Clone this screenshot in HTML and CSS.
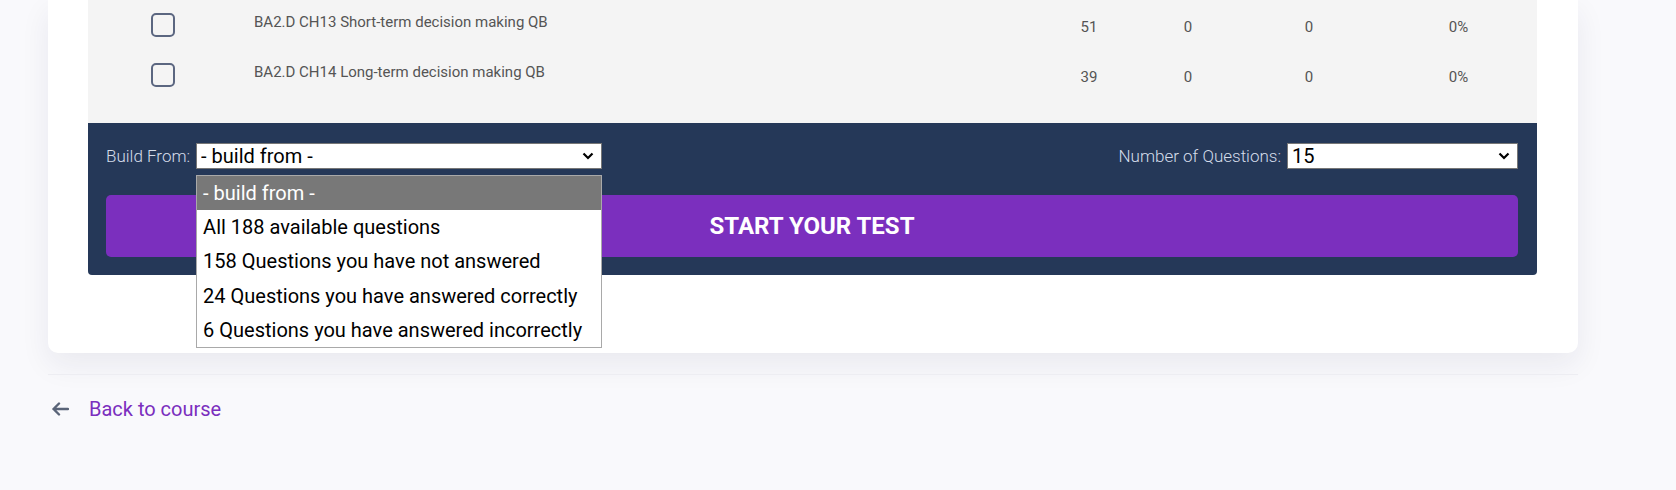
FILE: index.html
```html
<!DOCTYPE html>
<html lang="en">
<head>
    <meta charset="UTF-8">
    <meta name="viewport" content="width=device-width, initial-scale=1.0">
    <title>Build a test</title>
    <link rel="stylesheet" href="styles.css">
</head>
<body>
    <div class="page">
        <div class="card">
            <div class="bank-table">
                <div class="bank-row">
                    <div class="cell-check"><span class="checkbox"></span></div>
                    <div class="cell-name">BA2.D CH13 Short-term decision making QB</div>
                    <div class="cell-num">51</div>
                    <div class="cell-num">0</div>
                    <div class="cell-num">0</div>
                    <div class="cell-num">0%</div>
                </div>
                <div class="bank-row">
                    <div class="cell-check"><span class="checkbox"></span></div>
                    <div class="cell-name">BA2.D CH14 Long-term decision making QB</div>
                    <div class="cell-num">39</div>
                    <div class="cell-num">0</div>
                    <div class="cell-num">0</div>
                    <div class="cell-num">0%</div>
                </div>
            </div>

            <!-- builder panel -->
            <div class="builder">
                <div class="builder-controls">
                    <div class="field">
                        <label for="buildFrom">Build From:</label>
                        <div class="select-wrap build-select">
                            <select id="buildFrom">
                                <option>- build from -</option>
                            </select>
                            <svg class="chevron" width="12" height="8" viewBox="0 0 12 8"><path d="M1.5 1.5 L6 6 L10.5 1.5" fill="none" stroke="#000" stroke-width="2.2"/></svg>
                            <ul class="dropdown">
                                <li class="selected">- build from -</li>
                                <li>All 188 available questions</li>
                                <li>158 Questions you have not answered</li>
                                <li>24 Questions you have answered correctly</li>
                                <li>6 Questions you have answered incorrectly</li>
                            </ul>
                        </div>
                    </div>
                    <div class="field">
                        <label for="numQuestions">Number of Questions:</label>
                        <div class="select-wrap num-select">
                            <select id="numQuestions">
                                <option>15</option>
                            </select>
                            <svg class="chevron" width="12" height="8" viewBox="0 0 12 8"><path d="M1.5 1.5 L6 6 L10.5 1.5" fill="none" stroke="#000" stroke-width="2.2"/></svg>
                        </div>
                    </div>
                </div>
                <button type="button" class="start-btn">Start your test</button>
            </div>
        </div>

        <div class="divider"></div>

        <a class="back-link" href="#">
            <svg width="18" height="14" viewBox="0 0 18 14"><path d="M17 7 H2.5 M8 1.5 L2.5 7 L8 12.5" fill="none" stroke="#5a6478" stroke-width="2.4" stroke-linecap="round" stroke-linejoin="round"/></svg>
            <span>Back to course</span>
        </a>
    </div>
</body>
</html>
```

FILE: styles.css
```css
body {
    margin: 0;
    background-color: #f9f9fc;
    font-family: Roboto, 'Liberation Sans', sans-serif;
    overflow: hidden;
}

.page {
    padding: 0 98px 0 48px;
}

.card {
    background-color: #fff;
    border-radius: 0 0 10px 10px;
    padding: 0 41px 78px 40px;
    box-shadow: 0 12px 30px rgba(30, 30, 70, 0.07);
}

/* tabel bank soal */
.bank-table {
    background-color: #f4f4f4;
    padding-bottom: 23px;
}

.bank-row {
    display: grid;
    grid-template-columns: 150px 802px 98px 100px 142px 1fr;
    height: 50px;
    align-items: center;
    color: #555;
    font-size: 15px;
}

.cell-check {
    display: flex;
    justify-content: center;
}

.checkbox {
    width: 20px;
    height: 20px;
    border: 2px solid #5b6680;
    border-radius: 5px;
}

.cell-name {
    padding-left: 16px;
    margin-bottom: 6px;
}

.cell-num {
    text-align: center;
    padding-top: 4px;
}

.builder {
    background-color: #253858;
    border-radius: 0 0 4px 4px;
    padding: 20px 19px 18px 18px;
}

.builder-controls {
    display: flex;
    justify-content: space-between;
    align-items: center;
}

.field {
    display: flex;
    align-items: center;
    gap: 6px;
}

.field label {
    color: #d4dcea;
    font-size: 17px;
    font-weight: 300;
}

.select-wrap {
    position: relative;
}

.select-wrap select {
    appearance: none;
    display: block;
    height: 26px;
    border: 1px solid #767676;
    border-radius: 0;
    background-color: #fff;
    font-family: Roboto, 'Liberation Sans', sans-serif;
    font-size: 20px;
    line-height: 24px;
    color: #000;
    padding: 0 4px;
}

.build-select select {
    width: 406px;
}

.num-select select {
    width: 231px;
}

.chevron {
    position: absolute;
    right: 8px;
    top: 9px;
    pointer-events: none;
}

.dropdown {
    position: absolute;
    top: 32px;
    left: 0;
    width: 404px;
    margin: 0;
    padding: 0;
    list-style: none;
    background-color: #fff;
    border: 1px solid #a9a9a9;
    z-index: 5;
}

.dropdown li {
    height: 34.2px;
    line-height: 34px;
    padding-left: 6px;
    font-size: 20px;
    color: #000;
}

.dropdown li.selected {
    background-color: #787878;
    color: #fff;
}

.start-btn {
    display: block;
    width: 100%;
    height: 62px;
    margin-top: 26px;
    border: none;
    border-radius: 5px;
    background-color: #7b2fbe;
    color: #fff;
    font-family: Roboto, 'Liberation Sans', sans-serif;
    font-size: 24px;
    font-weight: 700;
    text-transform: uppercase;
    cursor: pointer;
}

.divider {
    height: 1px;
    margin-top: 21px;
    background-color: #ededf2;
}

.back-link {
    display: flex;
    align-items: center;
    gap: 20px;
    margin-top: 19px;
    height: 30px;
    padding-left: 3px;
    color: #7b2fbe;
    font-size: 20px;
    text-decoration: none;
}
```
